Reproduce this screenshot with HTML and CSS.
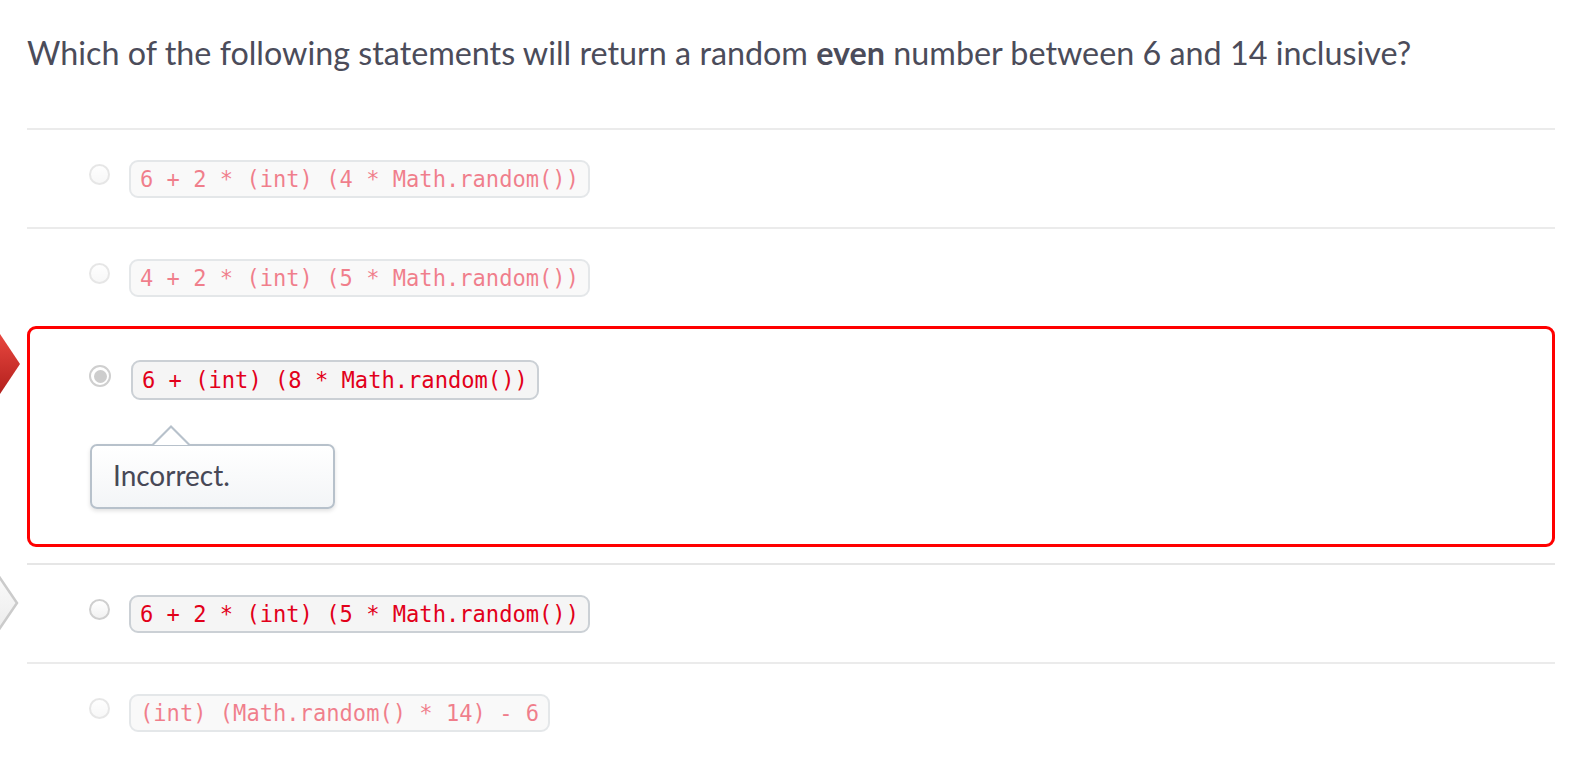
FILE: index.html
```html
<!DOCTYPE html>
<html lang="en">
<head>
<meta charset="utf-8">
<title>Quiz question</title>
<link rel="stylesheet" href="styles.css">
</head>
<body>
<main class="quiz">
  <h1 class="question">Which of the following statements will return a random <strong>even</strong> number between 6 and 14 inclusive?</h1>
  <div class="answers">
    <div class="answer faded">
      <span class="radio"></span>
      <code class="code">6 + 2 * (int) (4 * Math.random())</code>
    </div>
    <div class="answer faded">
      <span class="radio"></span>
      <code class="code">4 + 2 * (int) (5 * Math.random())</code>
    </div>
    <div class="answer selected">
      <svg class="marker" width="22" height="62" viewBox="0 0 22 62" aria-hidden="true">
        <defs>
          <linearGradient id="redg" x1="0" y1="0" x2="0" y2="1">
            <stop offset="0" stop-color="#e8473f"/>
            <stop offset="1" stop-color="#b3201d"/>
          </linearGradient>
        </defs>
        <polygon points="0,0 20,30 0,60" fill="url(#redg)"/>
      </svg>
      <div class="choice">
        <span class="radio checked"></span>
        <code class="code">6 + (int) (8 * Math.random())</code>
      </div>
      <div class="tooltip">Incorrect.</div>
    </div>
    <div class="answer">
      <svg class="marker gray" width="20" height="62" viewBox="0 0 20 62" aria-hidden="true">
        <defs>
          <linearGradient id="grayg" x1="0" y1="0" x2="0" y2="1">
            <stop offset="0" stop-color="#fafafa"/>
            <stop offset="1" stop-color="#ececec"/>
          </linearGradient>
        </defs>
        <polygon points="-2,2 17,30 -2,58" fill="url(#grayg)" stroke="#cbcbcb" stroke-width="2.5"/>
      </svg>
      <span class="radio"></span>
      <code class="code strong">6 + 2 * (int) (5 * Math.random())</code>
    </div>
    <div class="answer faded">
      <span class="radio"></span>
      <code class="code">(int) (Math.random() * 14) - 6</code>
    </div>
  </div>
</main>
</body>
</html>
```

FILE: styles.css
```css
html, body {
  margin: 0;
  padding: 0;
  background: #ffffff;
}

body {
  font-family: Lato, "Open Sans", "Liberation Sans", sans-serif;
  color: #4a4b57;
  overflow: hidden;
}

.quiz {
  padding: 33px 20px 0 27px;
}

.question {
  margin: 0 0 55px;
  font-size: 32.3px;
  line-height: 40px;
  font-weight: 400;
  color: #4b4c5a;
  letter-spacing: 0;
}

.question strong {
  font-weight: 700;
}

.answers {
  display: flex;
  flex-direction: column;
}

.answer {
  position: relative;
  display: flex;
  align-items: flex-start;
  border-top: 2px solid #ebebeb;
  padding: 30px 0 29px 62px;
}

.answer.faded .radio,
.answer.faded .code {
  opacity: 0.5;
}

.radio {
  flex: none;
  box-sizing: border-box;
  width: 21px;
  height: 21px;
  margin-top: 4px;
  border-radius: 50%;
  border: 2px solid #cfcfcf;
  background: linear-gradient(#ffffff, #f1f1f1);
  display: flex;
  align-items: center;
  justify-content: center;
}

.radio.checked {
  width: 22px;
  height: 22px;
  margin-top: 5px;
  border-color: #cfcfcf;
  background: #ffffff;
}

.radio.checked::after {
  content: "";
  width: 13px;
  height: 13px;
  border-radius: 50%;
  background: #cdcdcd;
}

.code {
  margin-left: 19px;
  box-sizing: border-box;
  height: 38px;
  padding: 0 9px;
  border: 2px solid #cbd0d5;
  border-radius: 9px;
  background: #f5f5f5;
  color: #e2001a;
  font-family: "DejaVu Sans Mono", "Liberation Mono", monospace;
  font-size: 22.1px;
  line-height: 34px;
  white-space: pre;
}

.answer.selected {
  border: 3px solid #ff0000;
  border-radius: 9px;
  padding: 31px 0 35px 59px;
  margin-bottom: 16px;
  flex-direction: column;
  align-items: flex-start;
}

.answer.selected + .answer {
  border-top-color: #e6e6e6;
}

.choice {
  display: flex;
  align-items: flex-start;
}

.choice .code {
  height: 40px;
  line-height: 36px;
  margin-left: 20px;
}

.marker {
  position: absolute;
  left: -27px;
  top: 8px;
  overflow: visible;
}

.answer.selected .marker {
  left: -30px;
  top: 5px;
}

.tooltip {
  position: relative;
  box-sizing: border-box;
  margin-top: 44px;
  margin-left: 1px;
  width: 245px;
  height: 65px;
  padding: 0 21px 3px;
  border: 2px solid #b7c1cb;
  border-radius: 7px;
  background: linear-gradient(#ffffff, #f3f5f7);
  box-shadow: 0 2px 4px rgba(0, 0, 0, 0.12);
  display: flex;
  align-items: center;
  font-size: 28px;
  color: #474856;
}

.tooltip::before,
.tooltip::after {
  content: "";
  position: absolute;
  width: 0;
  height: 0;
  border-style: solid;
  border-color: transparent;
}

.tooltip::before {
  left: 60px;
  top: -21px;
  border-width: 0 19px 19px 19px;
  border-bottom-color: #b7c1cb;
}

.tooltip::after {
  left: 62px;
  top: -18px;
  border-width: 0 17px 17px 17px;
  border-bottom-color: #ffffff;
}
```
